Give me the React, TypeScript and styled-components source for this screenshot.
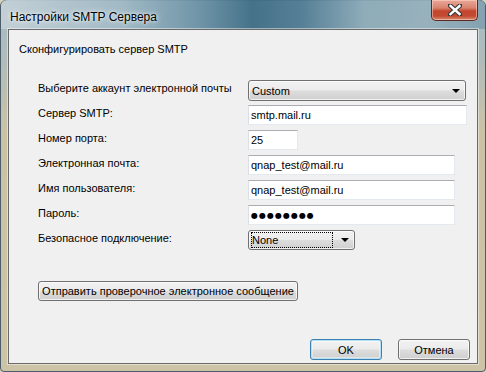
import React from "react";
import styled, { createGlobalStyle } from "styled-components";

const Global = createGlobalStyle`
  html, body { margin: 0; padding: 0; background: #d9d2bb; }
  body { width: 486px; height: 372px; overflow: hidden; }
  * { box-sizing: border-box; }
`;

const Window = styled.div`
  width: 486px;
  height: 372px;
  display: flex;
  flex-direction: column;
  padding: 0 7px 7px 7px;
  border: 1px solid #4b5d68;
  border-radius: 6px 6px 4px 4px;
  background:
    linear-gradient(180deg, rgba(165, 188, 199, 1) 0px, rgba(172, 186, 186, 0.9) 60px, rgba(203, 194, 166, 1) 130px, #cdc4a7 100%);
  font-family: "Liberation Sans", Arial, sans-serif;
  color: #000;
`;

const TitleBar = styled.div`
  height: 29px;
  margin: -1px -7px 0 -7px;
  padding: 0 7px 0 8px;
  display: flex;
  align-items: flex-start;
  border-radius: 6px 6px 0 0;
  background:
    linear-gradient(90deg,
      rgba(196, 209, 215, 0.95) 0%,
      rgba(160, 185, 197, 0.92) 25%,
      rgba(110, 148, 167, 0.92) 40%,
      rgba(64, 110, 134, 0.95) 52%,
      rgba(78, 122, 146, 0.92) 62%,
      rgba(140, 170, 184, 0.9) 75%,
      rgba(150, 176, 188, 0.92) 88%,
      rgba(130, 160, 176, 0.95) 100%);
`;

const Title = styled.div`
  font-family: "Liberation Sans", Arial, sans-serif;
  font-size: 12px;
  line-height: 16px;
  padding-top: 9px;
  padding-left: 1px;
  color: #000;
  text-shadow: 0 0 6px rgba(255, 255, 255, 0.9), 0 0 3px rgba(255, 255, 255, 0.9);
`;

const CloseButton = styled.div`
  margin-left: auto;
  width: 47px;
  height: 21px;
  display: flex;
  align-items: center;
  justify-content: center;
  border: 1px solid #5b2a22;
  border-top: none;
  border-radius: 0 0 5px 5px;
  background: linear-gradient(180deg, #e9a898 0%, #d9826f 40%, #c3462c 55%, #c24a31 80%, #d98d72 100%);
  box-shadow: inset 0 0 0 1px rgba(255, 220, 210, 0.5);
`;

const Client = styled.div`
  flex: 1;
  display: flex;
  flex-direction: column;
  background: #f0f0f0;
  border: 1px solid #6a6a6a;
  box-shadow: 0 0 0 1px rgba(255, 255, 255, 0.45);
  padding: 0 8px 3px 10px;
`;

const Heading = styled.div`
  font-size: 11px;
  line-height: 13px;
  margin-top: 13px;
`;

const Form = styled.div`
  margin-top: 24px;
  margin-left: 19px;
  display: grid;
  grid-template-columns: 210px 1fr;
  grid-auto-rows: 25px;
`;

const Label = styled.div`
  font-size: 11px;
  line-height: 13px;
  padding-top: 2px;
  white-space: nowrap;
`;

const TextBox = styled.div<{ $w: number }>`
  width: ${(p) => p.$w}px;
  height: 20px;
  background: #fff;
  border: 1px solid #e3e9ef;
  border-top-color: #abadb3;
  border-left-color: #dbdfe6;
  font-size: 11px;
  line-height: 18px;
  padding-left: 2px;
  white-space: nowrap;
`;

const Dots = styled.span`
  font-family: "DejaVu Sans", sans-serif;
  font-size: 8px;
  letter-spacing: 1px;
  line-height: 18px;
  position: relative;
  top: -1px;
`;

const Combo = styled.div<{ $w: number; $h: number }>`
  width: ${(p) => p.$w}px;
  height: ${(p) => p.$h}px;
  display: flex;
  align-items: center;
  border: 1px solid #707070;
  border-radius: 3px;
  background: linear-gradient(180deg, #f2f2f2 0%, #ebebeb 48%, #dddddd 52%, #cfcfcf 100%);
  box-shadow: inset 0 0 0 1px rgba(255, 255, 255, 0.7);
  font-size: 11px;
  padding: 0 5px 0 2px;
`;

const ComboText = styled.div<{ $focus?: boolean }>`
  flex: 1;
  height: 16px;
  line-height: 14px;
  border: 1px dotted ${(p) => (p.$focus ? "#000" : "transparent")};
  margin-right: 8px;
`;

const Arrow = styled.div`
  width: 0;
  height: 0;
  border-left: 4px solid transparent;
  border-right: 4px solid transparent;
  border-top: 4px solid #000;
`;

const TestButton = styled.button`
  margin-top: 26px;
  margin-left: 19px;
  width: 260px;
  height: 20px;
  padding: 0;
  font-family: "Liberation Sans", Arial, sans-serif;
  font-size: 11px;
  color: #000;
  border: 1px solid #707070;
  border-radius: 3px;
  background: linear-gradient(180deg, #f2f2f2 0%, #ebebeb 48%, #dddddd 52%, #cfcfcf 100%);
  box-shadow: inset 0 0 0 1px rgba(255, 255, 255, 0.7);
`;

const Footer = styled.div`
  margin-top: auto;
  margin-right: -1px;
  display: flex;
  justify-content: flex-end;
  gap: 16px;
`;

const DialogButton = styled.button<{ $default?: boolean }>`
  width: 72px;
  height: 21px;
  padding: 0;
  font-family: "Liberation Sans", Arial, sans-serif;
  font-size: 11px;
  color: #000;
  border: 1px solid ${(p) => (p.$default ? "#3c7fb1" : "#707070")};
  border-radius: 3px;
  background: linear-gradient(180deg, #f2f2f2 0%, #ebebeb 48%, #dddddd 52%, #cfcfcf 100%);
  box-shadow: ${(p) =>
    p.$default
      ? "inset 0 0 0 1px #b2e0f5, inset 0 0 0 2px rgba(255,255,255,0.4)"
      : "inset 0 0 0 1px rgba(255, 255, 255, 0.7)"};
`;

export default function App() {
  return (
    <>
      <Global />
      <Window>
        <TitleBar>
          <Title>Настройки SMTP Сервера</Title>
          <CloseButton>
            <svg width="14" height="12" viewBox="0 0 14 12">
              <path
                d="M2 1.5 L12 10.5 M12 1.5 L2 10.5"
                stroke="#3a3a3a"
                strokeWidth="4.6"
                strokeLinecap="square"
              />
              <path
                d="M2.5 2 L11.5 10 M11.5 2 L2.5 10"
                stroke="#ffffff"
                strokeWidth="2.4"
                strokeLinecap="square"
              />
            </svg>
          </CloseButton>
        </TitleBar>
        <Client>
          <Heading>Сконфигурировать сервер SMTP</Heading>
          <Form>
            <Label>Выберите аккаунт электронной почты</Label>
            <Combo $w={218} $h={21}>
              <ComboText>Custom</ComboText>
              <Arrow />
            </Combo>
            <Label>Сервер SMTP:</Label>
            <TextBox $w={219}>smtp.mail.ru</TextBox>
            <Label>Номер порта:</Label>
            <TextBox $w={50}>25</TextBox>
            <Label>Электронная почта:</Label>
            <TextBox $w={207}>qnap_test@mail.ru</TextBox>
            <Label>Имя пользователя:</Label>
            <TextBox $w={207}>qnap_test@mail.ru</TextBox>
            <Label>Пароль:</Label>
            <TextBox $w={207}>
              <Dots>●●●●●●●●</Dots>
            </TextBox>
            <Label>Безопасное подключение:</Label>
            <Combo $w={107} $h={20}>
              <ComboText $focus>None</ComboText>
              <Arrow />
            </Combo>
          </Form>
          <TestButton>Отправить проверочное электронное сообщение</TestButton>
          <Footer>
            <DialogButton $default>OK</DialogButton>
            <DialogButton>Отмена</DialogButton>
          </Footer>
        </Client>
      </Window>
    </>
  );
}
